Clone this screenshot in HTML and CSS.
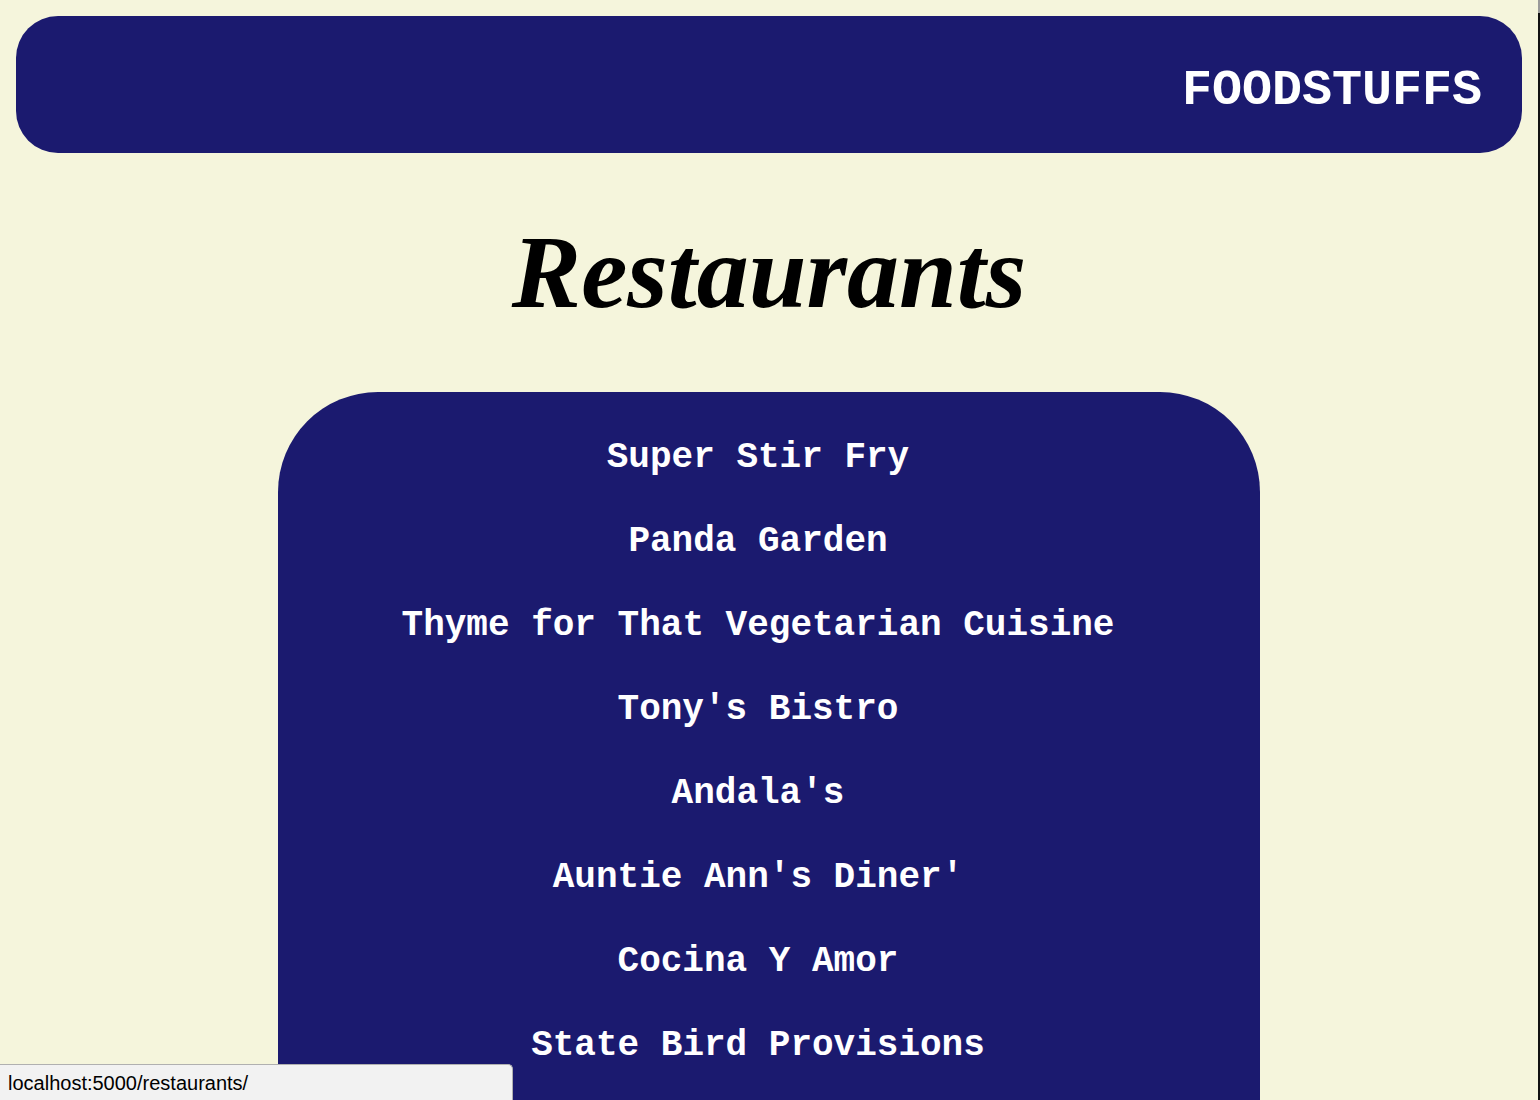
FILE: index.html
```html
<!DOCTYPE html>
<html lang="en">
<head>
<meta charset="utf-8">
<title>Restaurants</title>
<link rel="stylesheet" href="styles.css">
</head>
<body>
  <header class="site-header">
    <span class="brand">FOODSTUFFS</span>
  </header>
  <h1 class="page-title">Restaurants</h1>
  <main class="panel">
    <ul class="restaurant-list">
      <li><a href="#">Super Stir Fry</a></li>
      <li><a href="#">Panda Garden</a></li>
      <li><a href="#">Thyme for That Vegetarian Cuisine</a></li>
      <li><a href="#">Tony's Bistro</a></li>
      <li><a href="#">Andala's</a></li>
      <li><a href="#">Auntie Ann's Diner'</a></li>
      <li><a href="#">Cocina Y Amor</a></li>
      <li><a href="#">State Bird Provisions</a></li>
    </ul>
  </main>
  <div class="status-bar">localhost:5000/restaurants/</div>
  <div class="scroll-strip"></div>
</body>
</html>
```

FILE: styles.css
```css
html {
  overflow: hidden;
  background: #f5f5dc;
}

body {
  margin: 8px 10px 8px 8px;
  background: #f5f5dc;
  font-family: "Liberation Mono", "Courier New", monospace;
}

.site-header {
  margin: 8px;
  height: 137px;
  box-sizing: border-box;
  padding: 11px 40px 0 40px;
  background: #1b1a6f;
  border-radius: 42px;
  display: flex;
  align-items: center;
  justify-content: flex-end;
}

.brand {
  color: #ffffff;
  font-family: "Liberation Mono", "Courier New", monospace;
  font-weight: bold;
  font-size: 50px;
  line-height: normal;
}

.page-title {
  margin: 54px 0 55px 0;
  text-align: center;
  font-family: "Liberation Serif", "Times New Roman", serif;
  font-style: italic;
  font-weight: bold;
  font-size: 104px;
  line-height: 130px;
  color: #000000;
}

.panel {
  width: 982px;
  margin: 0 auto;
  box-sizing: border-box;
  padding: 24px 22px 200px 0;
  background: #1b1a6f;
  border-radius: 100px 100px 0 0;
}

.restaurant-list {
  list-style: none;
  margin: 0;
  padding: 0;
  text-align: center;
}

.restaurant-list li {
  font-size: 36px;
  line-height: 84px;
  font-weight: bold;
}

.restaurant-list a {
  color: #ffffff;
  text-decoration: none;
}

.status-bar {
  position: fixed;
  left: 0;
  bottom: 0;
  width: 513px;
  height: 36px;
  box-sizing: border-box;
  padding: 4px 0 0 8px;
  background: #f2f2f2;
  border: 1px solid #b0b0b0;
  border-left: none;
  border-bottom: none;
  border-radius: 0 5px 0 0;
  font-family: "Liberation Sans", Arial, sans-serif;
  font-size: 20px;
  line-height: 28px;
  color: #000000;
}

.scroll-strip {
  position: fixed;
  top: 0;
  right: 0;
  width: 2px;
  height: 100%;
  background: linear-gradient(#9a9a9a 0, #9a9a9a 13px, #111111 13px);
}
```
